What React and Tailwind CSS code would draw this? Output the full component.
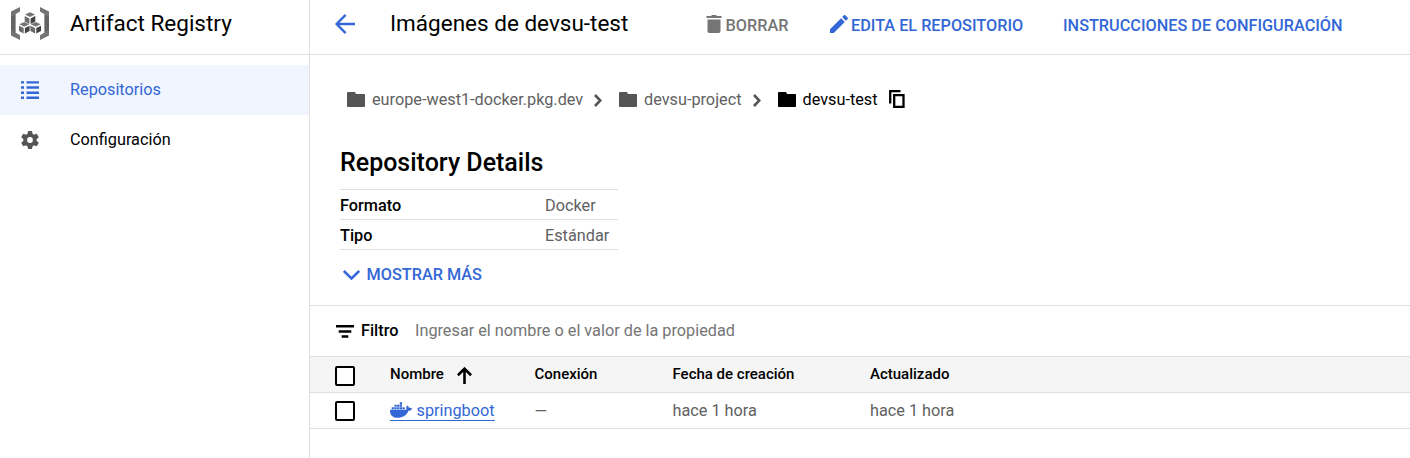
import React from "react";
import { MdEdit } from "react-icons/md";
import { FaDocker } from "react-icons/fa";

const Folder = ({ className }) => (
  <svg width="18" height="15" viewBox="0 0 18 15" className={`-mt-[2px] ${className}`} fill="currentColor">
    <path d="M1 0H8L9 2H17.2Q18 2 18 2.8V14.2Q18 15 17.2 15H.8Q0 15 0 14.2V1Q0 0 1 0Z" />
  </svg>
);

const Chevron = () => (
  <svg width="8" height="13" viewBox="0 0 8 13" fill="none" stroke="#555" strokeWidth="2.6" className="mt-px">
    <path d="M1 1L6.3 6.5L1 12" />
  </svg>
);

const Gear = () => (
  <svg width="18" height="18" viewBox="-9 -9 18 18" fill="#555">
    {[0, 60, 120].map((angle) => (
      <path key={angle} transform={`rotate(${angle})`} d="M-1.9 -9H1.9L2.9 -5V5L1.9 9H-1.9L-2.9 5V-5Z" />
    ))}
    <circle r="6.6" />
    <circle r="2.9" fill="white" />
  </svg>
);

const Logo = () => (
  <svg width="38" height="33" viewBox="0 0 38 33">
    <path d="M9 0V4.6L4.4 7.2V25.6L9 28.2V33L0 28.4V4.6Z M29 0V4.6L33.6 7.2V25.6L29 28.2V33L38 28.4V4.6Z" fill="#737373" />
    <path d="M0 10L4.4 7.2V25.6L0 22.5Z M38 10L33.6 7.2V25.6L38 22.5Z" fill="#646464" />
    {[[19, 5.2], [13.3, 14.9], [24.7, 14.9]].map(([x, y]) => (
      <g key={x} transform={`translate(${x} ${y})`}>
        <path d="M0 0L5 2.4L0 4.9L-5 2.4Z" fill="#757575" />
        <path d="M-5.3 3.8L-.6 6.2V11.7L-5.3 9.2Z" fill="#6b6b6b" />
        <path d="M5.3 3.8L.6 6.2V11.7L5.3 9.2Z" fill="#424242" />
      </g>
    ))}
  </svg>
);

const NavItem = ({ icon, label, active }) => (
  <div className={`flex h-[50px] items-center pl-[21px] text-[16.25px] ${active ? "bg-[#f0f5ff] text-[#3367d6]" : "text-black"}`}>
    <span className="flex w-[49px] items-center">{icon}</span>
    <span>{label}</span>
  </div>
);

const Detail = ({ name, value }) => (
  <div className="flex h-[30px] items-center border-b border-[#e0e0e0] pt-[4px]">
    <span className="w-[205px] font-medium">{name}</span>
    <span className="text-[#616161]">{value}</span>
  </div>
);

const Checkbox = () => <span className="block size-5 rounded-[2px] border-2 border-black bg-white" />;

const columns = "grid grid-cols-[80px_144.5px_138px_197.5px_1fr]";

export default function App() {
  return (
    <div className="flex h-[458px] w-[1410px] overflow-hidden bg-white font-['Roboto',sans-serif] text-[16.25px] text-black">
      <aside className="w-[310px] shrink-0 border-r border-[#e0e0e0]">
        <div className="flex h-[55px] items-center border-b border-[#e0e0e0] pb-[7px] pl-[11px]">
          <Logo />
          <h1 className="ml-[21px] text-[22.5px]">Artifact Registry</h1>
        </div>
        <nav className="pt-[10px]">
          <NavItem
            active
            label="Repositorios"
            icon={
              <svg width="18" height="18" viewBox="0 0 18 18" fill="currentColor">
                {[0.2, 5.3, 10.5, 15.6].map((y) => (
                  <path key={y} d={`M0 ${y}h3v2.4H0z M5.5 ${y}H18v2.4H5.5z`} />
                ))}
              </svg>
            }
          />
          <NavItem label="Configuración" icon={<Gear />} />
        </nav>
      </aside>

      <main className="min-w-0 flex-1">
        <header className="flex h-[55px] items-center border-b border-[#e0e0e0] pb-[7px] pl-[25px]">
          <svg width="20" height="20" viewBox="0 0 20 20" fill="none" stroke="#3367d6" strokeWidth="2.4">
            <path d="M20 10H2M10.6 .9L1.6 10L10.6 19.1" />
          </svg>
          <h2 className="ml-[35px] w-[316px] text-[22.5px]">Imágenes de devsu-test</h2>
          <div className="flex w-[124px] items-center pt-[5px] font-medium text-[#757575]">
            <svg width="16" height="18" viewBox="0 0 16 18" fill="currentColor" className="-mt-[4px]">
              <path d="M5.5 0H10.5V1H15.5V3H.5V1H5.5Z M1.5 4.5H14.5V16.2Q14.5 18 12.7 18H3.3Q1.5 18 1.5 16.2Z" />
            </svg>
            <span className="ml-[3.5px]">BORRAR</span>
          </div>
          <div className="flex w-[233px] items-center pt-[5px] font-medium text-[#3367d6]">
            <MdEdit size={24} className="-ml-[3px] -mt-[4px]" />
            <span>EDITA EL REPOSITORIO</span>
          </div>
          <span className="pt-[5px] font-medium text-[#3367d6]">INSTRUCCIONES DE CONFIGURACIÓN</span>
        </header>

        <div className="mt-[34px] flex h-[22px] items-center pl-[37px] text-[#616161]">
          <Folder className="mr-[7px] text-[#555]" />
          <span className="w-[222px] pt-px">europe-west1-docker.pkg.dev</span>
          <Chevron />
          <Folder className="ml-[17px] mr-[7px] text-[#555]" />
          <span className="w-[109px] pt-px">devsu-project</span>
          <Chevron />
          <Folder className="ml-[17px] mr-[6.5px] text-black" />
          <span className="w-[86.5px] pt-px text-black">devsu-test</span>
          <svg width="16" height="18" viewBox="0 0 16 18" fill="none" stroke="black" strokeWidth="2.3" className="-mt-[2px]">
            <path d="M1.2 13.5V1.2H11.5M5.2 5.2H14.5V16.8H5.2Z" />
          </svg>
        </div>

        <section className="ml-[30px] mt-[36px] w-[278px]">
          <h3 className="h-[43px] border-b border-[#e0e0e0] text-[25px] font-medium leading-[31px]">Repository Details</h3>
          <Detail name="Formato" value="Docker" />
          <Detail name="Tipo" value="Estándar" />
          <div className="flex h-[49px] items-center pl-[3px] font-medium text-[#3367d6]">
            <svg width="17" height="10" viewBox="0 0 17 10" fill="none" stroke="currentColor" strokeWidth="2.5">
              <path d="M.8 1L8.5 8.5L16.2 1" />
            </svg>
            <span className="ml-[6.5px] pt-px">MOSTRAR MÁS</span>
          </div>
        </section>

        <div className="mt-[6px] flex h-[52px] items-center border-b border-t border-[#e0e0e0] pl-[26px]">
          <svg width="18" height="13" viewBox="0 0 18 13">
            <path d="M0 0H18V2.5H0Z M2.7 5.2H15.3V7.7H2.7Z M5.7 10.3H12.3V12.8H5.7Z" />
          </svg>
          <span className="ml-[7px] w-[54px] font-medium">Filtro</span>
          <span className="text-[#757575]">Ingresar el nombre o el valor de la propiedad</span>
        </div>

        <div className={`${columns} h-[36px] items-center border-b border-[#e0e0e0] bg-[#f5f5f5] text-[15px] font-medium`}>
          <span className="pl-[25px] pt-[3px]"><Checkbox /></span>
          <span className="flex items-center">
            <span className="w-[66.5px]">Nombre</span>
            <svg width="15" height="17" viewBox="0 0 15 17" fill="none" stroke="black" strokeWidth="2.6" className="mt-[2px]">
              <path d="M7.5 17V2M.9 8.2L7.5 1.7L14.1 8.2" />
            </svg>
          </span>
          <span>Conexión</span>
          <span>Fecha de creación</span>
          <span>Actualizado</span>
        </div>
        <div className={`${columns} h-[36px] items-center border-b border-[#e0e0e0] text-[#616161]`}>
          <span className="pl-[25px]"><Checkbox /></span>
          <span className="mt-[7px] flex h-[21px] items-center self-start justify-self-start border-b border-[#3367d6] text-[#3367d6]">
            <FaDocker size={22} className="mr-[4.5px]" />
            <span className="pt-[2px]">springboot</span>
          </span>
          <span className="pt-[4px]">—</span>
          <span className="pt-[2px]">hace 1 hora</span>
          <span className="pt-[2px]">hace 1 hora</span>
        </div>
      </main>
    </div>
  );
}
